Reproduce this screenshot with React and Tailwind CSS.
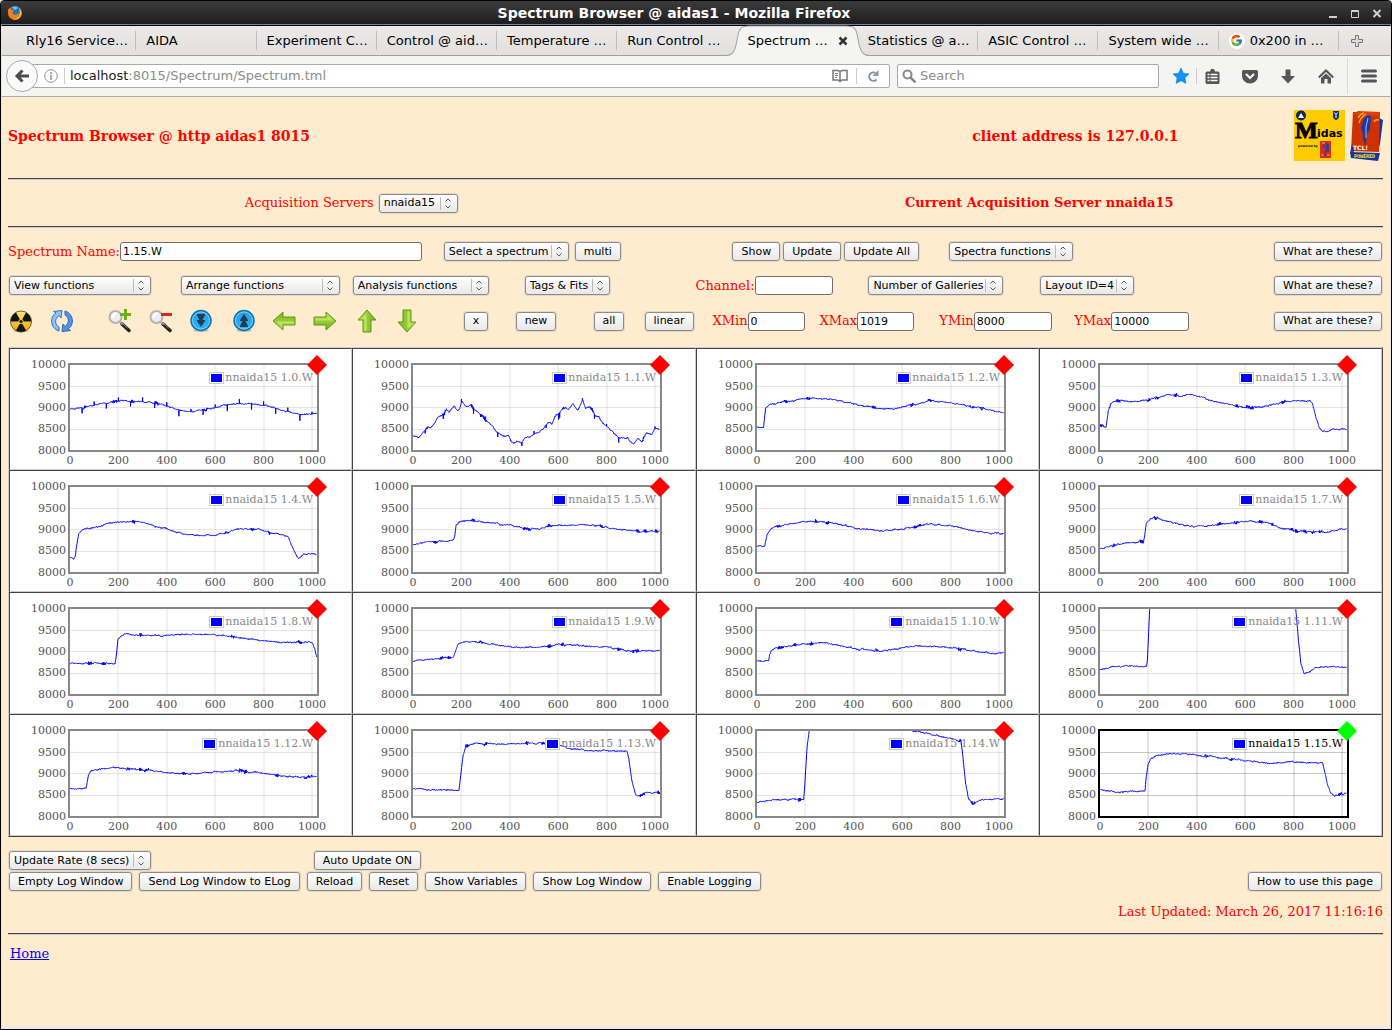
import { FcGoogle } from "react-icons/fc";
import clsx from "clsx";

const TABS = [
  "Rly16 Service…",
  "AIDA",
  "Experiment C…",
  "Control @ aid…",
  "Temperature …",
  "Run Control …",
  "Spectrum …",
  "Statistics @ a…",
  "ASIC Control …",
  "System wide …",
  "0x200 in …",
];

// traces are [channel, counts] pairs, spikes are [channel, delta]
const SPECTRA = [
  {
    name: "1.0.W",
    trace: [[0, 8970], [55, 9000], [96, 9047], [138, 9100], [179, 9140], [234, 9163], [303, 9147], [358, 9109], [399, 9047], [441, 8962], [482, 8924], [509, 8900], [537, 8947], [599, 8993], [633, 9062], [689, 9093], [757, 9085], [812, 9047], [854, 8985], [895, 8931], [923, 8877], [964, 8846], [1019, 8846]],
    spikes: [[50, -130], [100, 90], [150, -130], [200, 90], [250, -130], [300, 90], [350, -120], [400, 80], [450, -150], [500, 60], [550, -120], [600, 80], [650, -150], [700, 110], [750, -130], [800, 90], [850, -130], [900, 80], [950, -160], [1000, 60]],
  },
  {
    name: "1.1.W",
    trace: [[0, 8345], [23, 8310], [33, 8368], [47, 8468], [61, 8545], [74, 8522], [88, 8640], [102, 8777], [116, 8810], [124, 8830], [138, 8960], [149, 8910], [171, 9047], [185, 8930], [193, 8985], [201, 9140], [216, 9047], [230, 9024], [240, 9070], [251, 8960], [264, 8916], [281, 8830], [295, 8754], [308, 8670], [326, 8592], [340, 8484], [354, 8407], [372, 8345], [395, 8345], [405, 8230], [416, 8167], [430, 8237], [448, 8190], [463, 8314], [485, 8330], [501, 8414], [523, 8430], [540, 8522], [560, 8677], [574, 8630], [588, 8790], [602, 8854], [622, 8985], [643, 8960], [661, 9086], [680, 8954], [691, 9040], [701, 9163], [713, 8985], [730, 9032], [744, 8947], [753, 8810], [768, 8790], [784, 8653], [801, 8545], [822, 8445], [843, 8330], [859, 8314], [887, 8306], [898, 8198], [912, 8167], [928, 8275], [946, 8230], [964, 8422], [987, 8376], [1001, 8515], [1019, 8515]],
    spikes: [[50, -80], [125, -100], [130, -60], [200, 80], [250, -110], [300, 70], [350, -110], [450, -90], [500, 50], [550, -70], [602, -130], [606, -110], [700, 70], [750, -110], [800, 70], [850, -130], [1000, 60]],
  },
  {
    name: "1.2.W",
    trace: [[0, 8553], [27, 8550], [36, 8990], [54, 9085], [116, 9132], [178, 9200], [240, 9225], [322, 9178], [405, 9085], [487, 8993], [570, 8980], [653, 9075], [714, 9155], [776, 9132], [859, 9062], [942, 8970], [1019, 8880]],
  },
  {
    name: "1.3.W",
    trace: [[0, 8565], [25, 8545], [30, 8754], [36, 8985], [44, 9078], [62, 9147], [83, 9170], [124, 9147], [158, 9140], [186, 9178], [234, 9224], [275, 9294], [317, 9309], [326, 9255], [379, 9317], [413, 9255], [454, 9186], [496, 9116], [544, 9062], [592, 9016], [633, 9000], [675, 9024], [723, 9101], [764, 9132], [812, 9170], [867, 9170], [878, 9101], [892, 8777], [906, 8530], [917, 8453], [946, 8453], [961, 8515], [985, 8499], [1019, 8507]],
  },
  {
    name: "1.4.W",
    trace: [[0, 8383], [16, 8337], [22, 8391], [28, 8669], [36, 8916], [55, 9008], [110, 9062], [151, 9116], [186, 9170], [234, 9186], [275, 9186], [317, 9147], [351, 9078], [399, 9039], [441, 8939], [496, 8893], [537, 8862], [592, 8869], [633, 8916], [695, 9016], [771, 9016], [826, 8939], [902, 8846], [909, 8723], [923, 8553], [943, 8337], [967, 8414], [998, 8453], [1019, 8414]],
  },
  {
    name: "1.5.W",
    trace: [[0, 8661], [72, 8715], [154, 8746], [165, 8769], [172, 8839], [178, 9109], [189, 9170], [202, 9209], [244, 9217], [292, 9178], [347, 9155], [361, 9109], [402, 9109], [457, 9031], [526, 9024], [567, 9093], [622, 9101], [726, 9109], [801, 9062], [856, 9008], [925, 8954], [1019, 8962]],
  },
  {
    name: "1.6.W",
    trace: [[0, 8623], [32, 8625], [42, 8900], [58, 9030], [90, 9080], [136, 9132], [190, 9180], [240, 9200], [322, 9155], [405, 9040], [508, 8958], [611, 9016], [694, 9120], [797, 9109], [900, 8970], [1019, 8895]],
  },
  {
    name: "1.7.W",
    trace: [[0, 8561], [55, 8646], [96, 8684], [179, 8715], [184, 8839], [191, 9147], [207, 9240], [223, 9278], [262, 9217], [317, 9140], [399, 9070], [468, 9101], [537, 9155], [606, 9201], [661, 9186], [702, 9147], [744, 9047], [799, 8993], [854, 8954], [923, 8939], [978, 8993], [1019, 9024]],
  },
  {
    name: "1.8.W",
    trace: [[0, 8727], [186, 8727], [192, 8950], [198, 9300], [210, 9370], [223, 9410], [289, 9386], [372, 9370], [430, 9395], [500, 9400], [560, 9405], [640, 9370], [720, 9300], [800, 9260], [860, 9215], [940, 9220], [1000, 9220], [1010, 9080], [1019, 8890]],
  },
  {
    name: "1.9.W",
    trace: [[0, 8785], [60, 8830], [165, 8860], [175, 8990], [185, 9150], [205, 9220], [260, 9230], [330, 9170], [420, 9100], [520, 9110], [600, 9160], [700, 9150], [790, 9110], [900, 9020], [1019, 9020]],
  },
  {
    name: "1.10.W",
    trace: [[0, 8785], [48, 8785], [52, 8923], [59, 9024], [76, 9085], [138, 9140], [207, 9186], [275, 9209], [330, 9155], [399, 9085], [468, 9024], [537, 9024], [606, 9101], [675, 9132], [757, 9124], [840, 9062], [923, 9000], [991, 8962], [1019, 8985]],
  },
  {
    name: "1.11.W",
    trace: [[0, 8580], [48, 8653], [124, 8676], [193, 8661], [196, 8808], [206, 10100], [807, 10100], [809, 9990], [821, 9193], [830, 8730], [843, 8507], [867, 8538], [892, 8638], [950, 8646], [1019, 8646]],
  },
  {
    name: "1.12.W",
    trace: [[0, 8657], [66, 8657], [76, 8960], [86, 9062], [124, 9109], [198, 9143], [300, 9080], [430, 9020], [520, 8990], [600, 9050], [700, 9070], [800, 9000], [900, 8930], [1019, 8920]],
  },
  {
    name: "1.13.W",
    trace: [[0, 8645], [190, 8615], [196, 8900], [207, 9430], [219, 9640], [256, 9700], [400, 9690], [520, 9700], [600, 9680], [640, 9600], [720, 9540], [885, 9520], [892, 9350], [904, 8850], [921, 8500], [935, 8470], [960, 8560], [1019, 8560]],
  },
  {
    name: "1.14.W",
    trace: [[0, 8314], [34, 8368], [96, 8406], [193, 8400], [197, 8700], [207, 9626], [217, 10050], [620, 10050], [647, 9996], [689, 9942], [744, 9895], [799, 9811], [843, 9749], [851, 9394], [862, 8777], [874, 8430], [892, 8291], [916, 8376], [950, 8414], [1019, 8414]],
  },
  {
    name: "1.15.W",
    selected: true,
    trace: [[0, 8630], [83, 8576], [186, 8607], [191, 8931], [200, 9240], [213, 9371], [248, 9433], [303, 9479], [372, 9440], [454, 9409], [537, 9332], [620, 9301], [702, 9247], [771, 9270], [854, 9263], [920, 9247], [929, 9024], [940, 8738], [954, 8538], [969, 8476], [991, 8522], [1019, 8540]],
  },
];

const toX = (channel) => 60 + channel * 0.242;
const toY = (counts) => 15.5 + (10000 - counts) * 0.0432;

function valueAt(trace, channel) {
  const i = trace.findIndex(([c]) => c >= channel);
  if (i <= 0) return trace[Math.max(i, 0)][1];
  const [c0, v0] = trace[i - 1];
  const [c1, v1] = trace[i];
  return v0 + ((v1 - v0) * (channel - c0)) / (c1 - c0);
}

function buildPoints({ trace, spikes = [] }, seed) {
  let s = seed * 7919 + 17;
  const rand = () => {
    s = (s * 16807) % 2147483647;
    return s / 2147483647 - 0.5;
  };
  const points = [];
  let drift = 0;
  let burst = 0;
  for (let channel = 0; channel <= 1019; channel++) {
    drift = drift * 0.88 + rand() * 16;
    if (rand() > 0.492) burst = 14;
    burst--;
    const noise = drift + rand() * (burst > 0 ? 75 : 14);
    const spike = spikes.find(([c]) => c === channel);
    const counts = valueAt(trace, channel) + (spike ? spike[1] : noise);
    points.push(`${toX(channel).toFixed(1)},${toY(counts).toFixed(1)}`);
  }
  return points.join(" ");
}

const X_TICKS = [0, 200, 400, 600, 800, 1000];
const Y_TICKS = [
  [10000, 19],
  [9500, 41],
  [9000, 62],
  [8500, 83],
  [8000, 105],
];

const SpectrumPlot = ({ spectrum, index }) => {
  const { name, selected } = spectrum;
  const swatchX = name.length > 5 ? 192 : 199;
  return (
    <div className="h-[122px] overflow-hidden border border-t-[#444] border-r-[#ccc] border-b-[#ccc] border-l-[#444] bg-white">
      <svg
        width="320"
        height="120"
        className="[font-family:'DejaVu_Serif',serif] text-[11px]"
        role="img"
        aria-label={`nnaida15 ${name}`}
      >
        <clipPath id={`plot-${index}`}>
          <rect x="60" y="16" width="247" height="86" />
        </clipPath>
        <g stroke="#545454" strokeOpacity={selected ? 0.32 : 0.16}>
          {X_TICKS.slice(1).map((t) => (
            <path key={t} d={`M${Math.round(toX(t))} 16V101`} strokeWidth="2" strokeOpacity={selected ? 0.16 : 0.08} />
          ))}
          {[38, 59, 81].map((y) => (
            <path key={y} d={`M60 ${y - 0.5}H307`} />
          ))}
        </g>
        <polyline
          points={buildPoints(spectrum, index + 1)}
          clipPath={`url(#plot-${index})`}
          fill="none"
          stroke="#00f"
          strokeWidth="1"
        />
        <rect x="59" y="15" width="249" height="87" fill="none" stroke={selected ? "#000" : "#888"} strokeWidth="2" />
        <g fill="#545454">
          {Y_TICKS.map(([t, y]) => (
            <text key={t} x="56" y={y} textAnchor="end">{t}</text>
          ))}
          {X_TICKS.map((t) => (
            <text key={t} x={toX(t)} y="115" textAnchor="middle">{t}</text>
          ))}
        </g>
        <rect x={swatchX + 0.5} y="23.5" width="14" height="11" fill="#fff" stroke="#ccc" />
        <rect x={swatchX + 2} y="25" width="11" height="8" fill="#00f" />
        <text x="303" y="32" textAnchor="end" fill={selected ? "#000" : "#888"}>
          nnaida15 {name}
        </text>
        <path d="M307 6l10 10-10 10-10-10z" fill={selected ? "#0f0" : "#f00"} />
      </svg>
    </div>
  );
};

const Button = ({ children }) => (
  <button
    type="button"
    className="m-px h-[19px] shrink-0 rounded-[3px] border border-[#8b8b8b] bg-linear-to-b from-white to-[#e9e8e7] px-2 text-[11px] leading-4 whitespace-nowrap text-black shadow-[0_0_0_1px_#e4d8c4] [font-family:'DejaVu_Sans',sans-serif]"
  >
    {children}
  </button>
);

const Select = ({ id, label, width }) => (
  <span className={clsx("relative m-px inline-block h-[19px] shrink-0", width)}>
    <select
      id={id}
      aria-label={label}
      className="h-[19px] w-full appearance-none rounded-[3px] border border-[#8b8b8b] bg-linear-to-b from-white to-[#e9e8e7] pl-[4px] text-[11px] leading-4 text-black shadow-[0_0_0_1px_#e4d8c4] [font-family:'DejaVu_Sans',sans-serif]"
    >
      <option>{label}</option>
    </select>
    <svg
      width="18"
      height="15"
      className="pointer-events-none absolute top-[2px] right-[1px]"
      fill="none"
      stroke="#555"
    >
      <path d="M1.500 1v13" stroke="#bbb" />
      <path d="M6.500 5.500l2.500-2.500 2.500 2.500M6.500 9.500l2.500 2.500 2.500-2.500" />
    </svg>
  </span>
);

const Field = ({ id, label, value = "", width }) => (
  <div className="flex items-center">
    <label htmlFor={id} className="whitespace-nowrap">{label}</label>
    <input
      id={id}
      type="text"
      defaultValue={value}
      className={clsx(
        "h-[19px] shrink-0 rounded-[3px] border border-[#6f6f6f] bg-white px-[2px] text-[11px] text-black [font-family:'DejaVu_Sans',sans-serif]",
        width
      )}
    />
  </div>
);

const Rule = () => <hr className="h-[2px] border-t border-b border-t-[#444] border-b-[#ccc]" />;

const GreenArrow = ({ rotate, label }) => (
  <ToolIcon label={label}>
    <g transform={`rotate(${rotate} 12 12)`}>
      <path d="M1 8h12V3l10 9-10 9v-5H1z" fill="url(#green)" stroke="#5a9a12" />
      <path d="M2.500 9.500h12V7l5 4.500H2.500z" fill="#d3f07a" opacity=".6" />
    </g>
  </ToolIcon>
);

const ToolIcon = ({ label, children }) => (
  <button type="button" aria-label={label} className="h-6 w-6">
    <svg width="24" height="24" viewBox="0 0 24 24">{children}</svg>
  </button>
);

const Magnifier = ({ label, children }) => (
  <ToolIcon label={label}>
    <path d="M14 15l7 6.500" stroke="#222" strokeWidth="3.500" strokeLinecap="round" />
    <path d="M12 13l3 2.500" stroke="#999" strokeWidth="2" />
    <path d="M14.500 14.500l5 4.500" stroke="#888" strokeWidth="1" />
    <circle cx="7.500" cy="8" r="6" fill="#eceff0" stroke="#b4b4b4" strokeWidth="2" />
    <path d="M4.500 8.500a4 4 0 0 1 4-4" fill="none" stroke="#fff" strokeWidth="2" />
    {children}
  </ToolIcon>
);

const Disc = ({ label, flip }) => (
  <ToolIcon label={label}>
    <ellipse cx="12" cy="21.500" rx="8" ry="1.500" fill="#cdbd9f" />
    <circle cx="12" cy="11.500" r="10" fill="url(#disc)" stroke="#1173b8" strokeWidth="1.500" />
    <circle cx="12" cy="11.500" r="8.500" fill="none" stroke="#6fd0fb" />
    <g transform={flip ? "rotate(180 12 11.500)" : undefined} fill="#223c52">
      <path d="M8 5h8v1l-2.500 5h-3L8 6z" />
      <path d="M8 11h8v1l-4 6-4-6z" />
    </g>
  </ToolIcon>
);

const TabCurve = () => (
  <svg
    viewBox="0 0 144 29"
    preserveAspectRatio="none"
    className="absolute -top-[1px] -left-[12px] h-[31px] w-[calc(100%+24px)]"
  >
    <path
      d="M0 29C6 29 8 26 10 19L12 10C13 3 16 1 23 1H121C128 1 131 3 132 10L134 19C136 26 138 29 144 29Z"
      fill="#f4f4f3"
    />
    <path
      d="M0 28.500C6 28.500 8 26 10 19L12 10C13 3 16 1 23 1H121C128 1 131 3 132 10L134 19C136 26 138 28.500 144 28.500"
      fill="none"
      stroke="#a0a0a0"
    />
  </svg>
);

const Tab = ({ title, active, beforeActive, last }) => (
  <div
    className={clsx(
      "relative my-[5px] flex min-w-0 flex-1 items-center border-r pl-[10px]",
      active || beforeActive ? "border-transparent" : "border-[#bdbdbd]"
    )}
  >
    {active && (
      <div className="absolute -inset-y-[5px] inset-x-0">
        <TabCurve />
      </div>
    )}
    {last && (
      <span className="mr-[5px] grid h-4 w-4 shrink-0 place-items-center rounded-full bg-white">
        <FcGoogle size={13} />
      </span>
    )}
    <a href="#tab" className="relative flex-1 whitespace-nowrap">{title}</a>
    {active && (
      <button type="button" aria-label="Close tab" className="relative mr-[9px]">
        <svg width="10" height="10" viewBox="0 0 10 10" stroke="#333" strokeWidth="2.500">
          <path d="M1.500 1.500l7 7M8.500 1.500l-7 7" />
        </svg>
      </button>
    )}
  </div>
);

const TitleBar = () => (
  <header className="relative flex h-6 items-center justify-center border-b border-[#6685ad] bg-linear-to-b from-[#3b3b3b] via-[#2d2d2d] to-[#1d1d1d] text-white">
    <svg width="16" height="16" viewBox="0 0 16 16" className="absolute left-[6px]">
      <circle cx="8" cy="8" r="7" fill="#e8661b" />
      <circle cx="8.500" cy="6.500" r="5.500" fill="#1b75bb" />
      <path d="M5 2.500c2-1.500 5-1 6 .5L8 5z" fill="#6cc3ee" />
      <path d="M1 5c1-2 2-2 2.500-1.500L5 5l2 .5-1.500 2C6 10 9 10.500 12 8c0 4-3 6.500-6 6S.5 10 1 5z" fill="#ef7f1a" />
      <path d="M12 3c2.500 2 3.500 6 1 9s-6 3-7 2c4 0 6-2 6.500-5S12.500 5 12 3z" fill="#fdc62d" />
    </svg>
    <h1 className="mr-11 text-[14px] leading-4 font-bold">Spectrum Browser @ aidas1 - Mozilla Firefox</h1>
    <div className="absolute right-[9px] flex gap-3">
      <button type="button" aria-label="Minimise">
        <svg width="10" height="10" stroke="#d0d0d0" strokeWidth="2"><path d="M1 9h8" /></svg>
      </button>
      <button type="button" aria-label="Maximise">
        <svg width="10" height="10" stroke="#d0d0d0" fill="none">
          <path d="M1.500 2.500h7v7h-7zM1 3.500h8" />
        </svg>
      </button>
      <button type="button" aria-label="Close">
        <svg width="10" height="10" stroke="#d0d0d0" strokeWidth="2"><path d="M1.500 2l7 7M8.500 2l-7 7" /></svg>
      </button>
    </div>
  </header>
);

const TabStrip = () => (
  <nav aria-label="Tabs" className="flex h-[30px] border-b border-[#a0a0a0] bg-linear-to-b from-[#ebeae9] to-[#e1e0df] pl-[14px]">
    {TABS.map((title, i) => (
      <Tab key={title} title={title} active={i === 6} beforeActive={i === 5} last={i === 10} />
    ))}
    <button type="button" aria-label="New tab" className="w-[51px] pl-3">
      <svg width="12" height="12" fill="#ddd" stroke="#777">
        <path d="M4.500.5h3v4h4v3h-4v4h-3v-4h-4v-3h4z" />
      </svg>
    </button>
  </nav>
);

const NavBar = () => (
  <div className="flex h-[41px] items-center border-b border-[#aaa] bg-[#f4f4f3] pr-[13px] pl-1">
    <button
      type="button"
      aria-label="Back"
      className="relative z-10 grid h-8 w-8 shrink-0 place-items-center rounded-full border border-[#aaa] bg-[#fafafa]"
    >
      <svg width="16" height="16" fill="none" stroke="#4c4c4c" strokeWidth="3">
        <path d="M8.500 2.500L3 8l5.500 5.500M3 8h12" />
      </svg>
    </button>
    <div className="-ml-2 flex h-6 min-w-0 flex-1 items-center rounded-r-[2px] border border-[#aaa] bg-white pr-[10px] pl-[13px]">
      <svg width="14" height="14" className="shrink-0" fill="none" stroke="#909090">
        <circle cx="7" cy="7" r="6.300" />
        <path d="M7 6v5M7 3v2" strokeWidth="1.500" />
      </svg>
      <span className="mr-[5px] ml-[6px] h-4 w-px bg-[#ccc]" />
      <div className="relative flex-1 text-[#8c8c8c]">
        <span className="text-[#1a1a1a]">localhost</span>:8015/Spectrum/Spectrum.tml
      </div>
      <button type="button" aria-label="Reader view">
        <svg width="16" height="14" fill="none" stroke="#777" strokeWidth="1.500">
          <path d="M1 1.500h5.500L8 3l1.500-1.500H15v9.500h-5L8 12.500 6 11H1zM8 3v9" />
          <path d="M3 4.500h3M3 6.500h3M3 8.500h2" strokeWidth="1" />
        </svg>
      </button>
      <span className="mr-[10px] ml-2 h-4 w-px bg-[#ccc]" />
      <button type="button" aria-label="Reload page">
        <svg width="12" height="12" fill="none" stroke="#8696a6" strokeWidth="2">
          <path d="M8.500 3A4.200 4.200 0 1 0 9.500 9.500" />
          <path d="M11.500 0v6H5.500z" fill="#8696a6" stroke="none" />
        </svg>
      </button>
    </div>
    <div className="ml-[7px] flex h-6 w-[262px] items-center rounded-[2px] border border-[#aaa] bg-white pl-1">
      <svg width="15" height="14" fill="none" stroke="#888" strokeWidth="2">
        <circle cx="5.500" cy="5.500" r="4" />
        <path d="M8.500 8.500l5 5" strokeWidth="2.500" />
      </svg>
      <input
        type="search"
        aria-label="Search"
        placeholder="Search"
        className="ml-1 w-full min-w-0 text-[13px] outline-none placeholder:text-[#8c8c8c]"
      />
    </div>
    <button type="button" aria-label="Bookmark" className="ml-[13px]">
      <svg width="18" height="18" viewBox="0 0 18 18">
        <path d="M9 1l2.400 5.200 5.600.7-4.100 3.900 1 5.600L9 13.700l-4.900 2.700 1-5.600L1 6.900l5.600-.7z" fill="#1191fb" stroke="#0d7ad4" strokeWidth=".6" />
      </svg>
    </button>
    <span className="ml-[6px] h-4 w-px bg-[#ccc]" />
    <button type="button" aria-label="Bookmarks list" className="ml-2">
      <svg width="15" height="15" fill="#555">
        <path d="M2 2.500h3L6 0h3l1 2.500h3a1.500 1.500 0 0 1 1.500 1.500v9.500A1.500 1.500 0 0 1 13 15H2A1.500 1.500 0 0 1 .5 13.500V4A1.500 1.500 0 0 1 2 2.500z" />
        <path d="M2.500 5.500h2M5.500 5.500h7M2.500 8.500h2M5.500 8.500h7M2.500 11.500h2M5.500 11.500h7" stroke="#fff" strokeWidth="1.700" />
      </svg>
    </button>
    <button type="button" aria-label="Pocket" className="ml-[22px]">
      <svg width="16" height="15">
        <path d="M1.500 1h13A1.500 1.500 0 0 1 16 2.500V7a8 7.500 0 0 1-16 0V2.500A1.500 1.500 0 0 1 1.500 1z" fill="#555" />
        <path d="M4 5l4 4 4-4" fill="none" stroke="#fff" strokeWidth="2" />
      </svg>
    </button>
    <button type="button" aria-label="Downloads" className="ml-[23px]">
      <svg width="14" height="15" fill="#555">
        <path d="M4.500.5h5V7H14l-7 7.500L0 7h4.500z" />
      </svg>
    </button>
    <button type="button" aria-label="Home page" className="ml-[23px]">
      <svg width="16" height="15">
        <path d="M.8 8.500L8 1.500l7.200 7" fill="none" stroke="#555" strokeWidth="2" />
        <path d="M8 4.500l5 4.500v5.500H9.500V10h-3v4.500H3V9z" fill="#555" />
      </svg>
    </button>
    <span className="ml-[13px] h-9 w-px bg-[#dcdcdc]" />
    <button type="button" aria-label="Menu" className="ml-[13px]">
      <svg width="16" height="14" stroke="#555" strokeWidth="3" strokeLinecap="round">
        <path d="M1.500 2h13M1.500 7h13M1.500 12h13" />
      </svg>
    </button>
  </div>
);

const MidasLogo = () => (
  <svg width="51" height="51" viewBox="0 0 51 51" role="img" aria-label="Midas">
    <rect width="51" height="51" fill="#fc0" />
    <circle cx="7" cy="5.500" r="5" fill="#0b2a63" />
    <path d="M4 8l3-5 3 5z" fill="#fff" />
    <path d="M39 1h6v5q0 3-3 4-3-1-3-4z" fill="#14307c" />
    <path d="M40.500 2.500l1.500 2 1.500-2M42 5v3" stroke="#fff" fill="none" />
    <text x="1" y="28" className="[font-family:'Liberation_Serif',serif] text-[24px]" stroke="#000">M</text>
    <text x="23" y="27" className="text-[11px] font-bold [font-family:'DejaVu_Sans',sans-serif]">idas</text>
    <text x="4" y="37" className="text-[3px] font-bold [font-family:'DejaVu_Sans',sans-serif]">powered by</text>
    <rect x="26" y="31" width="11" height="17" fill="#d62e10" />
    <path d="M31.500 33q2 2 1 6l-2 7M34 34v8M29 35l2 3" stroke="#2740a0" strokeWidth="1.500" fill="none" />
    <path d="M28 33h3M33 45h3M27 45h3" stroke="#f6a623" />
  </svg>
);

const TclLogo = () => (
  <svg width="33" height="51" viewBox="0 0 33 51" role="img" aria-label="TCL Powered">
    <path d="M29 8l4 2-3 24-2 6z" fill="#16349b" />
    <path d="M3 2l27 0 -1 40-28-1z" fill="#cc3206" />
    <path d="M2 5l6-4 22 1-1 4z" fill="#d8400c" />
    <path d="M20 5q-7 1-8 9-2 5 1 9-1 6 3 13 0-8 1-12 4-4 3-10 2-5 0-9z" fill="#1b3aa6" />
    <path d="M18 8q-3 8-2 20" stroke="#a9b9ee" fill="none" />
    <path d="M8 8q2-4 6-5M9 13q1-5 7-9M24 12q1-3 5-2" stroke="#f7a80c" strokeWidth="1.500" fill="none" />
    <path d="M0 42l30 1-2 8-27-3z" fill="#16349b" />
    <path d="M0 43l2-9 2 9z" fill="#16349b" />
    <text x="3" y="40" fill="#fff" className="text-[6px] [font-family:'DejaVu_Sans',sans-serif]">TCL!</text>
    <text x="4" y="48" fill="#ffe21a" className="text-[5px] font-bold [font-family:'DejaVu_Sans_Mono',monospace]">POWERED</text>
  </svg>
);

const PageHeader = () => (
  <div className="grid grid-cols-[965fr_411fr] items-center pt-[13px] pb-[17px] text-[14px] leading-5 font-bold">
    <h2>Spectrum Browser @ http aidas1 8015</h2>
    <div className="flex items-center">
      <span>client address is 127.0.0.1</span>
      <span className="ml-auto flex gap-[5px]">
        <MidasLogo />
        <TclLogo />
      </span>
    </div>
  </div>
);

const ServerRow = () => (
  <div className="grid h-[46px] grid-cols-2 items-center justify-items-center">
    <div className="flex items-center gap-1">
      <label htmlFor="server">Acquisition Servers</label>
      <Select id="server" label="nnaida15" width="w-[79px]" />
    </div>
    <strong>Current Acquisition Server nnaida15</strong>
  </div>
);

const NameRow = () => (
  <div className="mt-[13px] grid grid-cols-[435fr_289fr_217fr_324fr_111fr] items-center">
    <Field id="name" label="Spectrum Name:" value="1.15.W" width="w-[302px]" />
    <div className="flex gap-1">
      <Select id="select-spectrum" label="Select a spectrum" width="w-[125px]" />
      <Button>multi</Button>
    </div>
    <div className="flex gap-px">
      <Button>Show</Button>
      <Button>Update</Button>
      <Button>Update All</Button>
    </div>
    <Select id="spectra-functions" label="Spectra functions" width="w-[124px]" />
    <div className="flex justify-end">
      <Button>What are these?</Button>
    </div>
  </div>
);

const FunctionRow = () => (
  <div className="mt-[13px] grid grid-cols-[172fr_172fr_172fr_172fr_172fr_172fr_233fr_111fr] items-center">
    <Select id="view" label="View functions" width="w-[142px]" />
    <Select id="arrange" label="Arrange functions" width="w-[159px]" />
    <Select id="analysis" label="Analysis functions" width="w-[136px]" />
    <Select id="tags" label="Tags &amp; Fits" width="w-[85px]" />
    <Field id="channel" label="Channel:" width="w-[78px]" />
    <Select id="galleries" label="Number of Galleries" width="w-[135px]" />
    <Select id="layout" label="Layout ID=4" width="w-[94px]" />
    <div className="flex justify-end">
      <Button>What are these?</Button>
    </div>
  </div>
);

const ToolRow = () => (
  <div className="mt-[13px] grid h-6 grid-cols-[41fr_58fr_41fr_40fr_43fr_40fr_41fr_42fr_40fr_68fr_52fr_78fr_51fr_69fr_107fr_120fr_135fr_198fr_111fr] items-center pl-px">
    <ToolIcon label="Clear spectra">
      <ellipse cx="12" cy="22" rx="8" ry="1.500" fill="#d8c7a6" />
      <circle cx="12" cy="12.500" r="10.500" fill="url(#nuclear)" stroke="#4a3c00" strokeWidth=".8" />
      <path d="M12 12.500L7 3.500a10.500 10.500 0 0 0-5.300 9zM12 12.500h10.300a10.500 10.500 0 0 0-5.300-9zM12 12.500l-5 9a10.500 10.500 0 0 0 10 0z" fill="#141414" />
      <circle cx="12" cy="12.500" r="2.500" fill="#f4c81c" />
      <circle cx="12" cy="12.500" r="1.600" fill="#141414" />
    </ToolIcon>
    <ToolIcon label="Refresh">
      <path d="M9 22C0 19-.5 8 6 4L3.500 2.500 12 1.500 11 9 9 6.500C4 10 5 16 9 18z" fill="#8fc3f3" stroke="#2d72c4" />
      <path d="M15 2c9 3 9.500 14 3 18l2.500 1.500L12 22.500l1-7.500 2 2.500C20 14 19 8 15 6z" fill="#4f97e6" stroke="#2566b8" />
    </ToolIcon>
    <Magnifier label="Zoom in">
      <path d="M17.500 0v11M12 5.500h11" stroke="#6fae1c" strokeWidth="3" />
    </Magnifier>
    <Magnifier label="Zoom out">
      <path d="M12 5.500h11" stroke="#d62828" strokeWidth="3" />
    </Magnifier>
    <Disc label="Scale down" />
    <Disc label="Scale up" flip />
    <GreenArrow rotate={180} label="Left" />
    <GreenArrow rotate={0} label="Right" />
    <GreenArrow rotate={270} label="Up" />
    <GreenArrow rotate={90} label="Down" />
    <div><Button>x</Button></div>
    <div><Button>new</Button></div>
    <div><Button>all</Button></div>
    <div><Button>linear</Button></div>
    <Field id="xmin" label="XMin" value="0" width="w-[57px]" />
    <Field id="xmax" label="XMax" value="1019" width="w-[57px]" />
    <Field id="ymin" label="YMin" value="8000" width="w-[78px]" />
    <Field id="ymax" label="YMax" value="10000" width="w-[78px]" />
    <div className="flex justify-end">
      <Button>What are these?</Button>
    </div>
  </div>
);

const LogControls = () => (
  <>
    <div className="mt-[13px] grid grid-cols-[305fr_1071fr]">
      <Select id="rate" label="Update Rate (8 secs)" width="w-[142px]" />
      <div className="flex">
        <Button>Auto Update ON</Button>
      </div>
    </div>
    <div className="flex gap-[5px]">
      <Button>Empty Log Window</Button>
      <Button>Send Log Window to ELog</Button>
      <Button>Reload</Button>
      <Button>Reset</Button>
      <Button>Show Variables</Button>
      <Button>Show Log Window</Button>
      <Button>Enable Logging</Button>
      <span className="flex-1" />
      <Button>How to use this page</Button>
    </div>
  </>
);

const Gradients = () => (
  <svg width="0" height="0" className="absolute">
    <linearGradient id="green" x1="0" y1="0" x2="0" y2="1">
      <stop offset="0" stopColor="#c5e858" />
      <stop offset="1" stopColor="#6fb01a" />
    </linearGradient>
    <linearGradient id="disc" x1="0" y1="0" x2="0" y2="1">
      <stop offset="0" stopColor="#2a9be6" />
      <stop offset="1" stopColor="#28b6f6" />
    </linearGradient>
    <linearGradient id="nuclear" x1="0" y1="0" x2="0" y2="1">
      <stop offset="0" stopColor="#ffe87a" />
      <stop offset="1" stopColor="#e8a800" />
    </linearGradient>
  </svg>
);

export default function App() {
  return (
    <div className="flex min-h-screen flex-col rounded-t-[4px] border border-black bg-[#ffebcd] text-[13px] leading-4 [font-family:'DejaVu_Sans',sans-serif]">
      <Gradients />
      <TitleBar />
      <div className="flex flex-1 flex-col border-x border-t border-x-[#e6e2dc] border-t-black">
        <TabStrip />
        <NavBar />
        <main className="flex-1 border-b-[3px] border-[#e9e9e9] pr-[7px] pl-[6px] text-[#f00] [font-family:'DejaVu_Serif',serif]">
          <PageHeader />
          <Rule />
          <ServerRow />
          <Rule />
          <NameRow />
          <FunctionRow />
          <ToolRow />
          <div className="mt-[14px] grid grid-cols-4 border border-t-[#ccc] border-r-[#444] border-b-[#444] border-l-[#ccc]">
            {SPECTRA.map((spectrum, i) => (
              <SpectrumPlot key={spectrum.name} spectrum={spectrum} index={i} />
            ))}
          </div>
          <LogControls />
          <p className="mt-[12px] mb-[13px] text-right">Last Updated: March 26, 2017 11:16:16</p>
          <Rule />
          <a href="#home" className="mt-[11px] ml-[2px] inline-block text-[#00f] underline">Home</a>
        </main>
      </div>
    </div>
  );
}
